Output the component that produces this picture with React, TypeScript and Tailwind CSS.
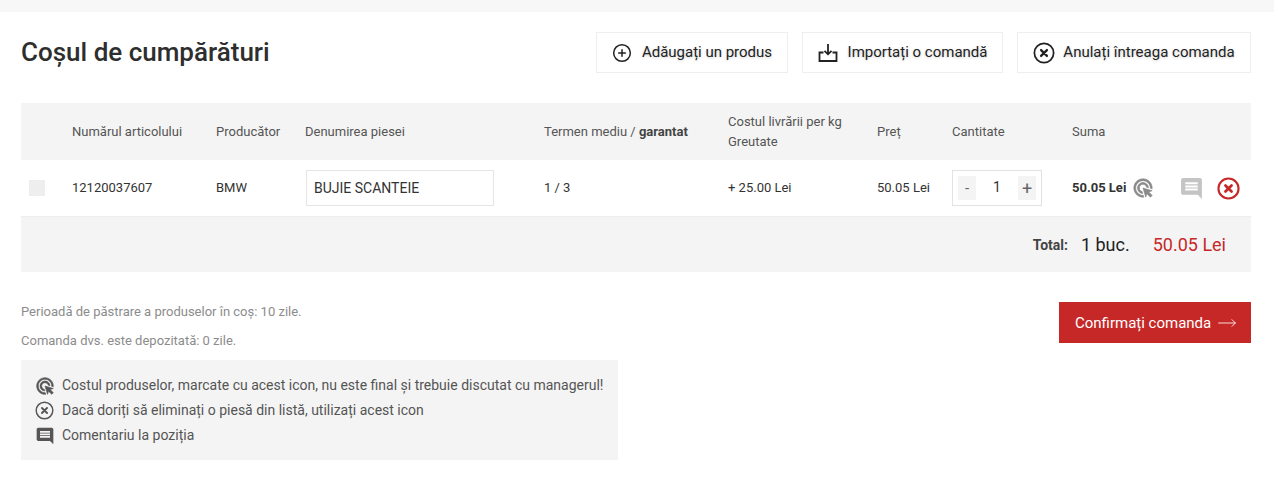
import { CirclePlus, MoveRight } from "lucide-react"
import { MdComment } from "react-icons/md"

const ImportIcon = () => (
  <svg width="20" height="20" viewBox="0 0 20 20" fill="none" stroke="#222" strokeWidth="1.8">
    <path d="M10 1v10M6.500 7.800 10 11.300l3.500-3.500" />
    <path d="M5.500 9.500H1.500v8.500h17V9.500h-4" />
  </svg>
)

const RoundX = ({ size, color, width }: { size: number; color: string; width: number }) => (
  <svg width={size} height={size} viewBox="0 0 24 24" fill="none" stroke={color} strokeWidth={width} strokeLinecap="round">
    <circle cx="12" cy="12" r="10.500" />
    <path d="m8.800 8.800 6.400 6.400M15.200 8.800l-6.400 6.400" strokeWidth={width + 0.6} />
  </svg>
)

// click target icon, a bit heavier than the stock one
const ClickIcon = ({ size, color, className }: { size: number; color: string; className?: string }) => (
  <svg width={size} height={size} viewBox="0 0 24 24" fill={color} stroke={color} strokeWidth="0.7" className={className}>
    <path d="M11.710 17.990C8.530 17.840 6 15.220 6 12c0-3.310 2.690-6 6-6 3.220 0 5.840 2.530 5.990 5.710l-2.100-.63C15.480 9.310 13.890 8 12 8c-2.210 0-4 1.790-4 4 0 1.890 1.310 3.480 3.080 3.890l.63 2.100zM22 12c0 .3-.01.6-.04.9l-1.970-.59c.01-.1.01-.21.01-.31 0-4.420-3.580-8-8-8s-8 3.580-8 8 3.580 8 8 8c.1 0 .21 0 .31-.01l.59 1.970c-.3.03-.6.04-.9.04-5.520 0-10-4.480-10-10S6.480 2 12 2s10 4.480 10 10zm-3.770 4.260L22 15l-10-3 3 10 1.260-3.770L20.120 22 22 20.120l-3.770-3.860z" />
  </svg>
)

const TopButton = ({ width, gap, icon, label }: { width: string; gap: string; icon: React.ReactNode; label: string }) => (
  <button className={`${width} ${gap} h-[41px] border border-[#eeeeee] bg-white flex items-center justify-center text-[15px] text-[#222] [text-shadow:0_1px_3px_rgba(0,0,0,0.2)]`}>
    {icon}
    <span>{label}</span>
  </button>
)

export default function App() {
  return (
    <div className="min-h-[479px] bg-white text-[13px] text-[#333]" style={{ fontFamily: "Roboto, 'Liberation Sans', sans-serif" }}>
      <div className="h-3 bg-[#f7f7f7]" />
      <div className="px-[21px] pr-[23px]">
        <div className="flex items-center justify-between mt-5 h-[41px]">
          <h1 className="text-[26px] font-medium text-[#2e2e2e]">Coșul de cumpărături</h1>
          <div className="flex gap-[14px]">
            <TopButton width="w-[192px]" gap="gap-[10px]" icon={<CirclePlus size={20} strokeWidth={1.8} color="#222" />} label="Adăugați un produs" />
            <TopButton width="w-[201px]" gap="gap-[10px]" icon={<ImportIcon />} label="Importați o comandă" />
            <TopButton width="w-[234px]" gap="gap-[8px]" icon={<RoundX size={22} color="#222" width={1.900} />} label="Anulați întreaga comanda" />
          </div>
        </div>

        <div className="mt-[30px] grid grid-cols-[51px_144px_89px_239px_184px_149px_75px_120px_179px] items-center h-[57px] bg-[#f4f4f4] text-[#555]">
          <div />
          <div>Numărul articolului</div>
          <div>Producător</div>
          <div>Denumirea piesei</div>
          <div>Termen mediu / <b className="font-bold text-[#444]">garantat</b></div>
          <div className="leading-[20px]">Costul livrării per kg<br />Greutate</div>
          <div>Preț</div>
          <div>Cantitate</div>
          <div>Suma</div>
        </div>

        <div className="grid grid-cols-[51px_144px_89px_239px_184px_149px_75px_120px_179px] items-center h-[57px] border-b border-[#eeeeee] text-[#333]">
          <div className="pl-2"><div className="size-4 bg-[#eeeeee]" /></div>
          <div>12120037607</div>
          <div>BMW</div>
          <div>
            <div className="ml-px w-[188px] h-9 border border-[#e5e5e5] flex items-center pl-[7px] text-[14px]">BUJIE SCANTEIE</div>
          </div>
          <div>1 / 3</div>
          <div>+ 25.00 Lei</div>
          <div>50.05 Lei</div>
          <div>
            <div className="w-[90px] h-9 border border-[#e2e2e2] flex items-center justify-between px-[5px]">
              <span className="w-[18px] h-6 bg-[#f4f4f4] flex items-center justify-center text-[15px] text-[#666]">-</span>
              <span className="text-[14px] -mt-px">1</span>
              <span className="w-[18px] h-6 bg-[#f4f4f4] flex items-center justify-center text-[18px] text-[#666]">+</span>
            </div>
          </div>
          <div className="flex items-center">
            <b className="font-bold">50.05 Lei</b>
            <ClickIcon size={22} color="#8a8a8a" className="ml-[6px]" />
            <MdComment size={25} color="#c4c4c4" className="ml-[25px]" />
            <span className="ml-[13px]"><RoundX size={23} color="#c62828" width={2.200} /></span>
          </div>
        </div>

        <div className="h-[55px] bg-[#f4f4f4] flex items-center justify-end pr-[25px]">
          <b className="font-bold text-[14px] text-[#444] mt-[2px]">Total:</b>
          <span className="ml-[13px] text-[18px] text-[#222]">1 buc.</span>
          <span className="ml-[23px] text-[18px] text-[#c62828]">50.05 Lei</span>
        </div>

        <div className="flex justify-between mt-[30px]">
          <div className="text-[#8c8c8c]">
            <p className="leading-[20px]">Perioadă de păstrare a produselor în coș: 10 zile.</p>
            <p className="leading-[20px] mt-[9px]">Comanda dvs. este depozitată: 0 zile.</p>
          </div>
          <button className="w-[192px] h-[41px] bg-[#c62828] text-white text-[15px] flex items-center gap-[6px] pl-4 pt-px">
            Confirmați comanda <MoveRight size={20} strokeWidth={1} />
          </button>
        </div>

        <div className="w-[597px] h-[100px] mt-[9px] bg-[#f4f4f4] pl-[14px] pt-[13px] text-[14px] text-[#555] leading-[25px]">
          <div className="flex items-center gap-[7px] h-[25px]"><ClickIcon size={20} color="#555" />Costul produselor, marcate cu acest icon, nu este final și trebuie discutat cu managerul!</div>
          <div className="flex items-center gap-[7px] h-[25px]"><RoundX size={19} color="#555" width={1.800} /><span className="ml-px">Dacă doriți să eliminați o piesă din listă, utilizați acest icon</span></div>
          <div className="flex items-center gap-[7px] h-[25px]"><MdComment size={20} color="#555" />Comentariu la poziția</div>
        </div>
      </div>
    </div>
  )
}
